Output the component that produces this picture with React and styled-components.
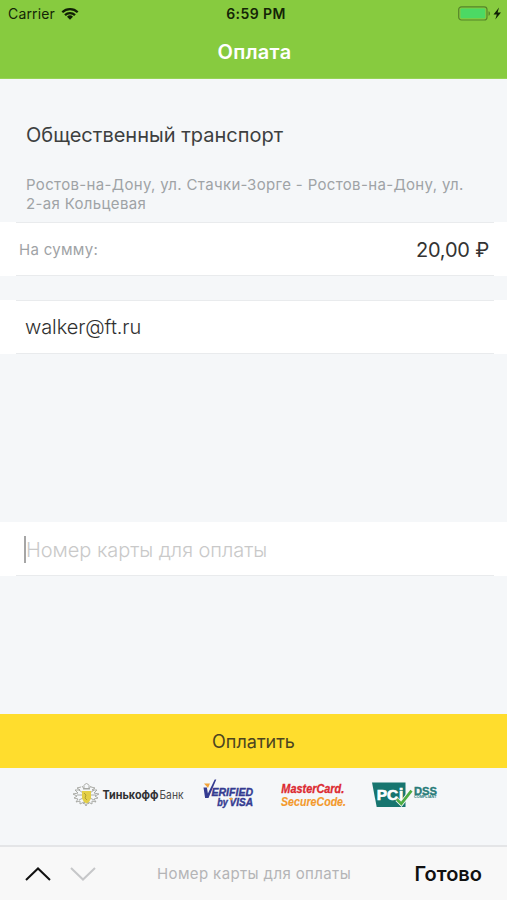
import React from "react";
import styled, { createGlobalStyle } from "styled-components";

const GlobalStyle = createGlobalStyle`
  * {
    box-sizing: border-box;
  }
  body {
    margin: 0;
    background: #f5f7f9;
    font-family: Inter, "Liberation Sans", sans-serif;
    font-feature-settings: "calt" 0;
  }
`;

const Screen = styled.div`
  display: flex;
  flex-direction: column;
  height: 900px;
  overflow: hidden;
`;

const Header = styled.header`
  height: 79px;
  background: #87cb3f;
  border-bottom: 1px solid #96d356;
`;

const StatusBar = styled.div`
  display: grid;
  grid-template-columns: 1fr auto 1fr;
  align-items: center;
  height: 27px;
  padding: 0 5px 0 8px;
  color: #142506;
  font-size: 14px;
`;

const Carrier = styled.div`
  display: flex;
  align-items: center;
  gap: 6px;
  letter-spacing: 0.15px;
`;

const Time = styled.div`
  padding-left: 2px;
  font-weight: 600;
  letter-spacing: 0.4px;
`;

const Battery = styled.div`
  display: flex;
  justify-content: flex-end;
`;

const Title = styled.h1`
  margin: 0;
  padding-left: 2px;
  text-align: center;
  color: #fff;
  font-size: 20px;
  line-height: 50px;
  font-weight: 600;
  letter-spacing: 0.3px;
`;

const Order = styled.section`
  height: 143px;
  padding: 42px 26px 0;

  h2 {
    margin: 0;
    color: #3d3f40;
    font-size: 20px;
    line-height: 28px;
    font-weight: 400;
  }
  p {
    margin: 27px 0 0;
    color: #9fa3a6;
    font-size: 15px;
    line-height: 18.5px;
    letter-spacing: 0.34px;
    white-space: nowrap;
  }
`;

const Row = styled.div`
  display: flex;
  align-items: center;
  justify-content: space-between;
  flex: none;
  height: 54px;
  margin-top: ${(props) => props.$gap || 0}px;
  padding: 1px 18px 0 ${(props) => props.$indent || 25}px;
  background-color: #fff;
  background-image: linear-gradient(${(props) => (props.$open ? "#fff, #fff" : "#e9ebed, #e9ebed")}),
    linear-gradient(#e9ebed, #e9ebed);
  background-size: 478px 1px;
  background-repeat: no-repeat;
  background-position: 16px 0, 16px 53px;
`;

const Label = styled.span`
  color: #9fa3a6;
  font-size: 15px;
  letter-spacing: 0.3px;
`;

const Amount = styled.span`
  padding-top: 1px;
  color: #333;
  font-size: 20px;
  letter-spacing: -0.2px;
`;

const Email = styled.span`
  padding-bottom: 2px;
  color: #303030;
  font-size: 20px;
  font-weight: 300;
  letter-spacing: -0.1px;
`;

const Caret = styled.span`
  width: 2px;
  height: 27px;
  background: #a6a6a6;
`;

const Placeholder = styled.span`
  flex: 1;
  padding-top: 1px;
  color: #c9c9c9;
  font-size: 20px;
  font-weight: 300;
  letter-spacing: -0.05px;
`;

const PayButton = styled.button`
  flex: none;
  height: 54px;
  margin-top: 138px;
  border: 0;
  background: #ffdd2d;
  color: #4c4420;
  font: 400 18px Inter, sans-serif;
`;

const Logos = styled.div`
  flex: none;
  height: 77px;
  svg {
    display: block;
  }
`;

const KeyboardBar = styled.footer`
  display: grid;
  grid-template-columns: 125px 1fr 125px;
  align-items: center;
  height: 55px;
  padding: 0 25px;
  border-top: 2px solid #e4e5e7;
  background: #f8f8f8;
`;

const Arrows = styled.div`
  display: flex;
  gap: 19px;
`;

const Hint = styled.span`
  padding-left: 7px;
  color: #b4b4b6;
  font-size: 15px;
  letter-spacing: 0.38px;
  white-space: nowrap;
`;

const Done = styled.span`
  color: #111;
  font-size: 20px;
  font-weight: 600;
  text-align: right;
`;

const WifiIcon = () => (
  <svg width="18" height="13" viewBox="0 0 18 13" fill="none" stroke="#102005" strokeWidth="2.3">
    <path d="M1.3 5.2a11 11 0 0 1 15.4 0" />
    <path d="M4 8.1a7.1 7.1 0 0 1 10 0" />
    <path d="M9 12.8 6 9.8a4.3 4.3 0 0 1 6 0z" fill="#102005" stroke="none" />
  </svg>
);

const BatteryIcon = () => (
  <svg width="44" height="15" viewBox="0 0 44 15">
    <rect x="0.7" y="0.8" width="28.3" height="13.2" rx="2.8" fill="none" stroke="#55852b" strokeWidth="1.2" />
    <rect x="2.5" y="2.5" width="24.7" height="9.8" rx="1" fill="#4cd964" />
    <path d="M30.5 5.2c2 .5 2 4 0 4.5z" fill="#55852b" />
    <path d="M41 1.5 35.5 8.4h3.3l-1.5 5.2 5.7-7.2h-3.4z" fill="#102005" />
  </svg>
);

const Arrow = ({ color, d }) => (
  <svg width="26" height="16" viewBox="0 0 26 16" fill="none" stroke={color} strokeWidth="2">
    <path d={d} />
  </svg>
);

const TinkoffLogo = () => (
  <g>
    <g fill="none" stroke="#a3a49e" strokeWidth="0.9">
      <path d="M84 785.5q2.5-4 5 0v3h-5zM83 789h7M81 787l-4 1 3 2-5 0 3 3-5 1 4 2-3 2 4 1-2 3 4-1 0 3 4-2 2 4 2-4 4 2 0-3 4 1-2-3 4-1-3-2 4-2-5-1 3-3-5 0 3-2-4-1" />
      <path d="M79 790l4 3M77 795h5M79 800l4-2M94 790l-4 3M96 795h-5M94 800l-4-2M82 786l2 3M91 786l-2 3M83 804l3-3 3 3" />
    </g>
    <path d="M82 791h9v7q-1 4-4.5 5.5Q83 802 82 798z" fill="#e3cf48" />
    <path d="M84 793l2 2-1 3 2 2" fill="none" stroke="#a39330" strokeWidth="0.8" />
    <text x="102.5" y="799" fontSize="11.3" fontWeight="700" fill="#303133" textLength="56" lengthAdjust="spacingAndGlyphs">
      Тинькофф
    </text>
    <text x="159.5" y="799" fontSize="11.3" fill="#4a4b4d" textLength="24" lengthAdjust="spacingAndGlyphs">
      Банк
    </text>
  </g>
);

const VisaLogo = () => (
  <g fontFamily="'Liberation Sans', sans-serif" fontStyle="italic" fontWeight="700" fill="#343b91">
    <path d="M204 783.5h6l-2 4.5z" fill="#f2a33a" />
    <path d="M203.5 787.5h3.4l1 6 6.8-14h1.6l-7.8 18.5h-3.4z" />
    <g stroke="#343b91" strokeWidth="0.4">
      <text x="211.5" y="796.3" fontSize="11" textLength="41.5" lengthAdjust="spacingAndGlyphs">
        ERIFIED
      </text>
      <text x="217.3" y="805.9" fontSize="10" textLength="10.5" lengthAdjust="spacingAndGlyphs">
        by
      </text>
      <text x="229.5" y="805.9" fontSize="10.5" textLength="23.5" lengthAdjust="spacingAndGlyphs">
        VISA
      </text>
    </g>
    <path d="M228.8 798h4.2l-1.8 2.8z" fill="#f2a33a" />
  </g>
);

const MasterCardLogo = () => (
  <g fontFamily="'Liberation Sans', sans-serif" fontStyle="italic" fontWeight="700">
    <text x="281.3" y="793.3" fontSize="12.6" fill="#dc2a32" stroke="#dc2a32" strokeWidth="0.3" textLength="63" lengthAdjust="spacingAndGlyphs">
      MasterCard.
    </text>
    <text x="281" y="805.6" fontSize="12.6" fill="#f39a2d" stroke="#f39a2d" strokeWidth="0.15" textLength="65" lengthAdjust="spacingAndGlyphs">
      SecureCode.
    </text>
  </g>
);

const PciLogo = () => (
  <g fontFamily="'Liberation Sans', sans-serif" fontWeight="700">
    <path d="M372 782.5h33.5v24.5h-28.8z" fill="#17756f" />
    <text x="376.8" y="799.8" fontSize="14.5" fill="#fff" stroke="#fff" strokeWidth="0.6" textLength="21.5" lengthAdjust="spacingAndGlyphs">
      PC
    </text>
    <text x="398.8" y="799.8" fontSize="17" fill="#fff" stroke="#fff" strokeWidth="0.5">
      i
    </text>
    <path d="M397 799.5l4.3 4.2 10.2-13" fill="none" stroke="#f5f7f8" strokeWidth="4.5" />
    <path d="M397 799.5l4.3 4.2 10.2-13" fill="none" stroke="#4dac43" strokeWidth="2.7" />
    <text x="414" y="794.5" fontSize="11.3" fill="#287c79" stroke="#287c79" strokeWidth="0.4" textLength="23" lengthAdjust="spacingAndGlyphs">
      DSS
    </text>
    <text x="414" y="798" fontSize="3" fill="#287c79" textLength="22.5" lengthAdjust="spacingAndGlyphs">
      COMPLIANT
    </text>
  </g>
);

const App = () => {
  return (
    <Screen>
      <GlobalStyle />
      <Header>
        <StatusBar>
          <Carrier>
            Carrier <WifiIcon />
          </Carrier>
          <Time>6:59 PM</Time>
          <Battery>
            <BatteryIcon />
          </Battery>
        </StatusBar>
        <Title>Оплата</Title>
      </Header>

      <Order>
        <h2>Общественный транспорт</h2>
        <p>
          Ростов-на-Дону, ул. Стачки-Зорге - Ростов-на-Дону, ул.
          <br />
          2-ая Кольцевая
        </p>
      </Order>
      <Row $indent={19}>
        <Label>На сумму:</Label>
        <Amount>20,00 ₽</Amount>
      </Row>
      <Row $gap={24}>
        <Email>walker@ft.ru</Email>
      </Row>
      <Row $gap={168} $indent={24} $open>
        <Caret />
        <Placeholder>Номер карты для оплаты</Placeholder>
      </Row>

      <PayButton>Оплатить</PayButton>
      <Logos>
        <svg width="507" height="77" viewBox="0 768 507 77">
          <TinkoffLogo />
          <VisaLogo />
          <MasterCardLogo />
          <PciLogo />
        </svg>
      </Logos>

      <KeyboardBar>
        <Arrows>
          <Arrow color="#111" d="M1 14 13 2.5 25 14" />
          <Arrow color="#c6c7c9" d="M1 2 13 13.5 25 2" />
        </Arrows>
        <Hint>Номер карты для оплаты</Hint>
        <Done>Готово</Done>
      </KeyboardBar>
    </Screen>
  );
};

export default App;
